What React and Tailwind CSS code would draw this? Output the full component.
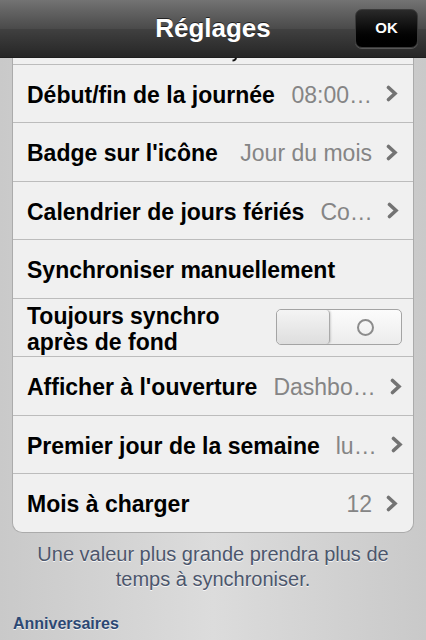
import React from "react";

const rows = [
  { label: "Début/fin de la journée", value: "08:00…", chevron: true },
  { label: "Badge sur l'icône", value: "Jour du mois", chevron: true },
  { label: "Calendrier de jours fériés", value: "Co…", chevron: true },
  { label: "Synchroniser manuellement" },
  { label: "Toujours synchro après de fond", toggle: true },
  { label: "Afficher à l'ouverture", value: "Dashbo…", chevron: true },
  { label: "Premier jour de la semaine", value: "lu…", chevron: true },
  { label: "Mois à charger", value: "12", chevron: true },
];

function Chevron() {
  return (
    <svg width="12" height="17" viewBox="0 0 12 17" className="shrink-0">
      <polyline points="2.5,2.5 9,8.5 2.5,14.5" fill="none" stroke="#737373" strokeWidth="3.6" strokeLinecap="round" strokeLinejoin="miter" />
    </svg>
  );
}

function Toggle() {
  return (
    <div className="flex h-[36px] w-[126px] shrink-0 overflow-hidden rounded-[5px] border border-[#a4a4a4] bg-gradient-to-b from-[#fcfcfc] to-[#ececec]">
      <div className="h-full w-[53px] rounded-[4px] border-r border-[#a9a9a9] bg-gradient-to-b from-[#f4f4f4] to-[#dedede] shadow-[1px_0_2px_rgba(0,0,0,0.15)]" />
      <div className="flex flex-1 items-center justify-center">
        <div className="h-[17px] w-[17px] rounded-full border-2 border-[#8c8c8c]" />
      </div>
    </div>
  );
}

function Row({ row, last }) {
  return (
    <div
      className={`flex h-[58.5px] items-center border-t border-[#bcbcbc] pl-[14px] pr-[15px] pt-[3px] ${last ? "rounded-b-[10px]" : ""}`}
    >
      {row.toggle ? (
        <>
          <span className="w-[230px] text-[23px] font-bold leading-[26px] text-black">{row.label}</span>
          <div className="flex-1" />
          <div className="mr-[-4px] -mt-[3px]">
            <Toggle />
          </div>
        </>
      ) : (
        <>
          <span className="whitespace-nowrap text-[23px] font-bold text-black">{row.label}</span>
          <div className="flex-1" />
          {row.value && <span className="ml-4 whitespace-nowrap text-[23px] text-[#858585]">{row.value}</span>}
          {row.chevron && (
            <span className="ml-[14px] -mt-[2px]">
              <Chevron />
            </span>
          )}
        </>
      )}
    </div>
  );
}

export default function App() {
  return (
    <div
      className="flex h-[640px] w-[426px] flex-col overflow-hidden bg-gradient-to-r from-[#c9c9c9] via-[#dcdcdc] to-[#c9c9c9]"
      style={{ fontFamily: '"Liberation Sans", Arial, sans-serif' }}
    >
      <header className="relative z-10 flex h-[58px] shrink-0 items-center justify-center border-b border-[#1e1e1e] bg-gradient-to-b from-[#6a6a6a] via-[#414141] to-[#262626]">
        <div className="absolute inset-x-0 top-0 h-[29px] bg-gradient-to-b from-[#737373] to-[#4a4a4a]" />
        <h1 className="relative text-[26px] font-bold text-white [text-shadow:0_-1px_0_rgba(0,0,0,0.6)]">Réglages</h1>
        <button className="absolute right-[8px] top-[9px] flex h-[39px] w-[63px] items-center justify-center rounded-[7px] border border-[#3a3a3a] bg-gradient-to-b from-[#2a2a2a] via-[#0c0c0c] to-black shadow-[0_1px_0_rgba(255,255,255,0.2)]">
          <span className="text-[15px] font-bold text-white">OK</span>
        </button>
      </header>

      <div className="flex-1 overflow-hidden">
        <div className="mx-[12px] -mt-[52px] rounded-b-[10px] border-x border-b border-[#ababab] bg-[#f0f0f0]">
          {/* tail of the row scrolled under the bar */}
          <div className="flex h-[57.5px] items-end pb-[2px] pl-[219px]">
            <svg width="6" height="5" viewBox="0 0 6 5">
              <path d="M5 0 C5 3 3.5 4.5 0.5 4.5 L0.5 2.5 C2 2.5 3 2 3 0 Z" fill="#111" />
            </svg>
          </div>
          {rows.map((row, i) => (
            <Row key={row.label} row={row} last={i === rows.length - 1} />
          ))}
        </div>

        <p className="mx-[30px] mt-[9px] text-center text-[20px] leading-[25px] text-[#4c566c] [text-shadow:0_1px_0_rgba(255,255,255,0.8)]">
          Une valeur plus grande prendra plus de temps à synchroniser.
        </p>

        <h2 className="mt-[20px] pl-[13px] text-[16px] font-bold text-[#2c4874] [text-shadow:0_1px_0_rgba(255,255,255,0.8)]">
          Anniversaires
        </h2>
      </div>
    </div>
  );
}
